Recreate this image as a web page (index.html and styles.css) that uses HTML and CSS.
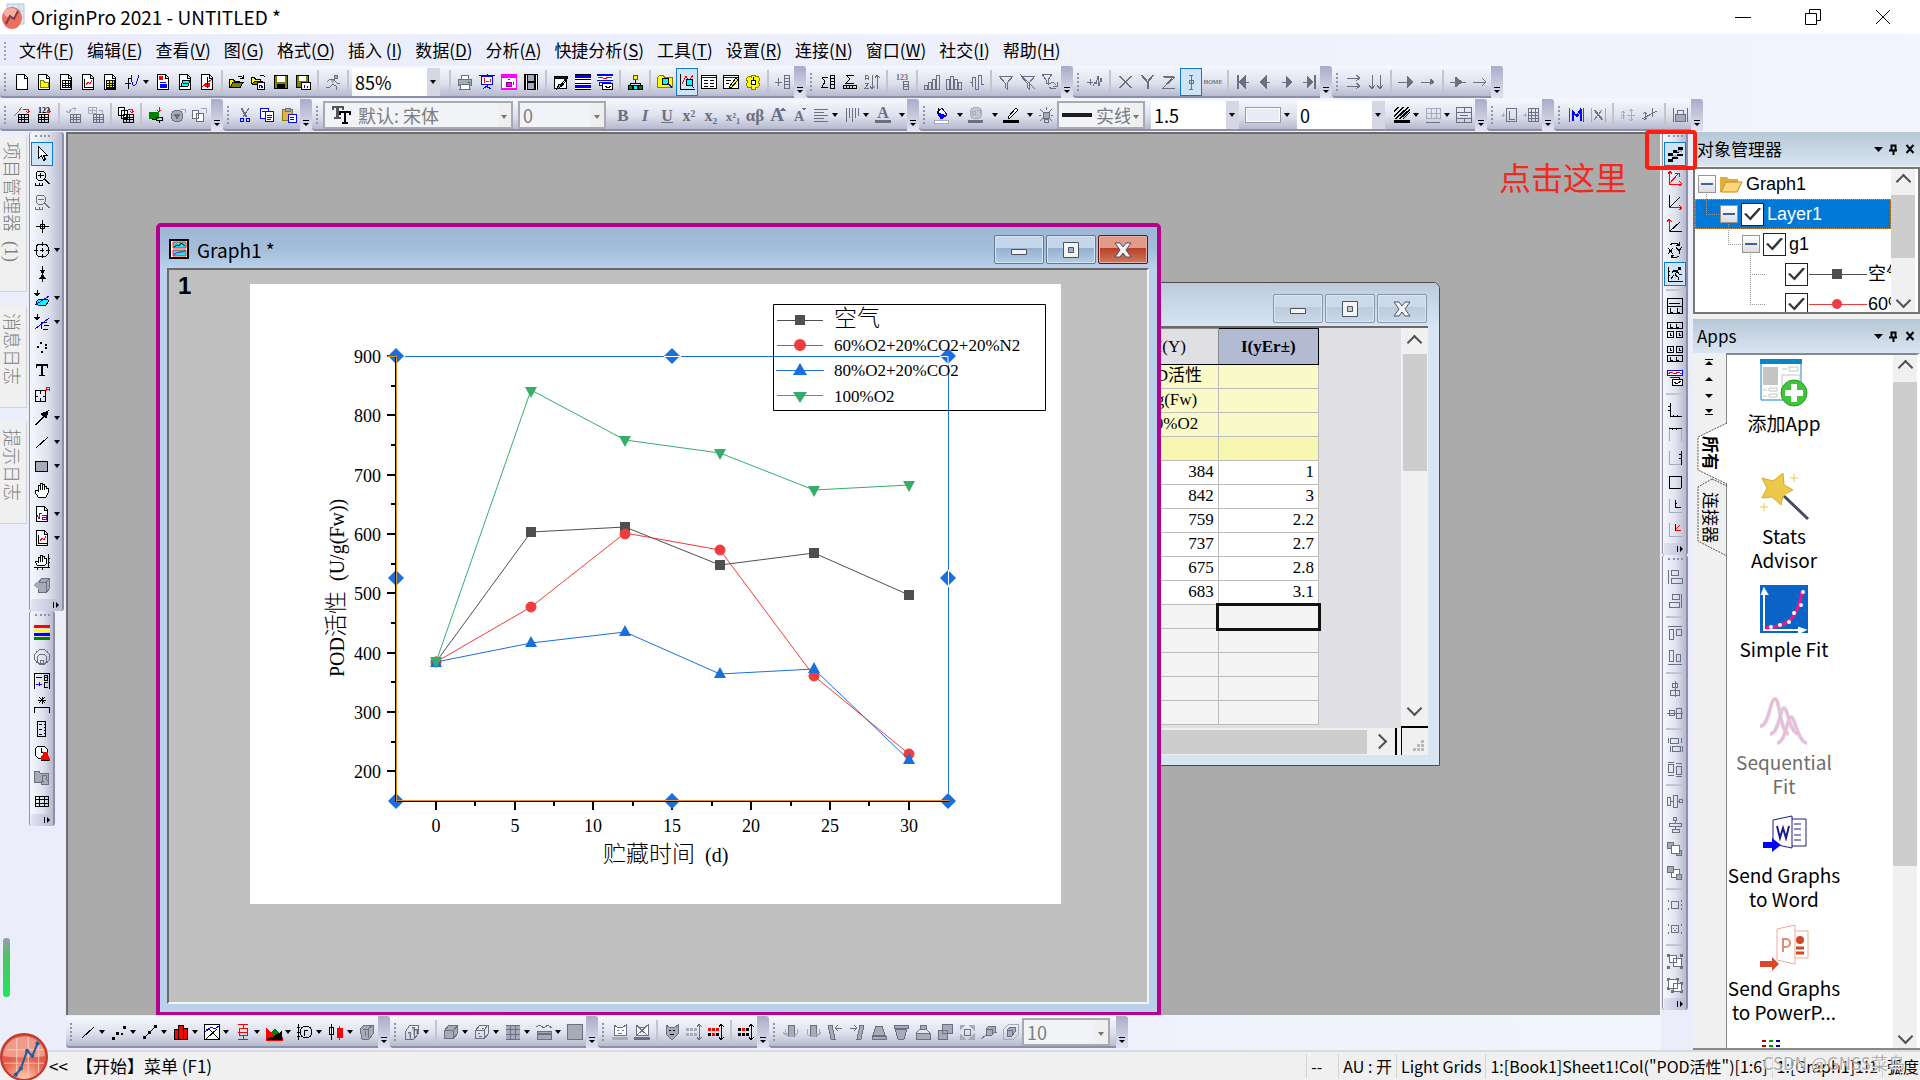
FILE: index.html
```html
<!DOCTYPE html>
<html lang="zh-CN">
<head>
<meta charset="utf-8">
<title>OriginPro 2021 - UNTITLED *</title>
<link rel="stylesheet" href="styles.css">
</head>
<body>
<header class="titlebar">
  <svg class="app-icon" viewBox="0 0 24 28"><path d="M6 1h17v20H6z" fill="#dbe9f5" stroke="#a9c6e0"/><path d="M12 1v20M18 1v20M6 8h17M6 14h17" stroke="#b8d0e6"/><ellipse cx="11" cy="15" rx="10" ry="11" fill="#ea6f5c"/><ellipse cx="10" cy="10" rx="7" ry="5" fill="#f5b0a2"/><path d="M5 21l4-8 4 3 4-8" stroke="#7a3b52" stroke-width="2" fill="none"/></svg>
  <h1>OriginPro 2021 - UNTITLED *</h1>
  <div class="caption">
    <button aria-label="最小化"><svg viewBox="0 0 16 16"><path d="M0 8.500h16"/></svg></button>
    <button aria-label="还原"><svg viewBox="0 0 16 16"><path d="M.5 4.500h11v11H.5zM4.500 4V.5h11v11h-4"/></svg></button>
    <button aria-label="关闭"><svg viewBox="0 0 16 16"><path d="M1 1l14 14M15 1L1 15"/></svg></button>
  </div>
</header>
<nav class="menubar">
  <a href="#">文件(<u>F</u>)</a><a href="#">编辑(<u>E</u>)</a><a href="#">查看(<u>V</u>)</a><a href="#">图(<u>G</u>)</a><a href="#">格式(<u>O</u>)</a><a href="#">插入 (<u>I</u>)</a><a href="#">数据(<u>D</u>)</a><a href="#">分析(<u>A</u>)</a><a href="#">快捷分析(<u>S</u>)</a><a href="#">工具(<u>T</u>)</a><a href="#">设置(<u>R</u>)</a><a href="#">连接(<u>N</u>)</a><a href="#">窗口(<u>W</u>)</a><a href="#">社交(<u>I</u>)</a><a href="#">帮助(<u>H</u>)</a>
</nav>
<div class="bar-row">
  <div class="bar">
    <span class="tools" data-icons="doc docfolder docgrid docgraph docmatrix func^ doclayout docnote docimg | open opent save savet | run |"></span>
    <label class="combo w88"><select aria-label="缩放"><option>85%</option></select></label>
    <span class="tools" data-icons="| print slide camera film | brush bars stack | tree | find *findg script edit gear | addcol"></span>
  </div>
  <div class="bar"><span class="tools" data-icons="sigcol sigrow sort | n123 | hist1 hist2 hist3 | funnel funnelx funnelr"></span></div>
  <div class="bar"><span class="tools" data-icons="addwave | tx ty tz *cursor home | first prev next last"></span></div>
  <div class="bar"><span class="tools" data-icons="rr dd | arr1 arr2 | arr3 arr4"></span></div>
</div>
<div class="bar-row">
  <div class="bar"><span class="tools" data-icons="impwiz imp123 | recalc batch | dup | plug world copies"></span></div>
  <div class="bar"><span class="tools" data-icons="cut copy paste"></span></div>
  <div class="bar">
    <label class="combo font off"><svg viewBox="0 0 20 20"><path d="M1 1h12v4h-2V3H8v9h2v2H3v-2h2V3H3v2H1z" fill="#555"/><path d="M8 6h12v4h-2V8h-3v9h2v2h-6v-2h2V8h-3v2H8z" fill="#000"/></svg><select aria-label="字体" disabled><option>默认: 宋体</option></select></label>
    <label class="combo w88 off"><select aria-label="字号" disabled><option>0</option></select></label>
    <span class="tools" data-icons="bold ital under sup sub supsub ab abig asmall align^ valign^ acolor^^"></span>
  </div>
  <div class="bar">
    <span class="tools" data-icons="bucket^^ globe^^ pencil^^ bulb"></span>
    <label class="combo w88 off"><i class="solid-line"></i><select aria-label="线型" disabled><option>实线</option></select></label>
    <label class="combo w88"><select aria-label="线宽"><option>1.5</option></select></label>
    <button class="swatch" aria-label="填充颜色"><i></i></button>
    <label class="combo w88"><select aria-label="图案"><option>0</option></select></label>
    <span class="tools" data-icons="hatch^ border^ tcell"></span>
  </div>
  <div class="bar"><span class="tools" data-icons="addlayer addgrid"></span></div>
  <div class="bar"><span class="tools" data-icons="mask unmask | align1 align2 | lock"></span></div>
</div>
<main class="body">
  <aside class="side-tabs">
    <button>项目管理器&nbsp;&nbsp;(1)</button><button>消息日志</button><button>提示日志</button>
    <i class="meter"></i>
  </aside>
  <div class="dock left">
    <div class="bar vert wide"><span class="tools" data-icons="*pointer zoomin zoomout cross target^ snap pick^ pickl^ dots text annot arrow^ line^ rect^ hand eq^ graphobj^ handax cube"></span></div>
    <div class="bar vert"><span class="tools" data-icons="colors bubble legend star scale stamp fstamp table"></span></div>
  </div>
  <section class="center">
    <div class="workspace">
      <article class="win book">
        <header><div class="wbtns"><button aria-label="最小化"><svg viewBox="0 0 20 20"><use href="#w-min"/></svg></button><button aria-label="最大化"><svg viewBox="0 0 20 20"><use href="#w-max"/></svg></button><button aria-label="关闭"><svg viewBox="0 0 20 20"><use href="#w-close"/></svg></button></div></header>
        <div class="sheet">
          <div class="cells">
            <table>
              <thead><tr><th>G(Y)</th><th>H(Y)</th><th class="sel">I(yEr±)</th></tr></thead>
              <tbody class="meta">
                <tr><td></td><td>POD活性</td><td></td></tr><tr><td></td><td>U/g(Fw)</td><td></td></tr><tr><td></td><td>100%O2</td><td></td></tr><tr class="deep"><td></td><td></td><td></td></tr>
              </tbody>
              <tbody class="data">
                <tr><td></td><td>384</td><td>1</td></tr><tr><td></td><td>842</td><td>3</td></tr><tr><td></td><td>759</td><td>2.2</td></tr><tr><td></td><td>737</td><td>2.7</td></tr><tr><td></td><td>675</td><td>2.8</td></tr><tr><td></td><td>683</td><td>3.1</td></tr>
              </tbody>
              <tbody class="blank">
                <tr><td></td><td></td><td class="active"></td></tr><tr><td></td><td></td><td></td></tr><tr><td></td><td></td><td></td></tr><tr><td></td><td></td><td></td></tr><tr><td></td><td></td><td></td></tr>
              </tbody>
            </table>
          </div>
          <div class="scroll v"><b class="up"></b><i></i><b class="down"></b></div>
          <div class="scroll h"><i></i><b class="right"></b></div>
          <div class="corner"><svg viewBox="0 0 12 12"><path d="M8 0h3v3H8zM4 4h3v3H4zM8 4h3v3H8zM0 8h3v3H0zM4 8h3v3H4zM8 8h3v3H8z" fill="#b8b8b8"/></svg></div>
        </div>
      </article>
      <article class="win graph">
        <header>
          <svg class="wicon" viewBox="0 0 22 22"><path d="M1 1h18v18H1z" fill="#fff" stroke="#000" stroke-width="2"/><path d="M4 3h13v6H4zM4 11h13v6H4z" fill="#19e5ea" stroke="#f22"/><path d="M5 8l3-2 2 1 2-3 4 3" stroke="#000" fill="none"/><path d="M5 16c3-4 6-2 11-4" stroke="#808" fill="none"/></svg>
          <h2>Graph1 *</h2>
          <div class="wbtns"><button aria-label="最小化"><svg viewBox="0 0 20 20"><use href="#w-min"/></svg></button><button aria-label="最大化"><svg viewBox="0 0 20 20"><use href="#w-max"/></svg></button><button class="close" aria-label="关闭"><svg viewBox="0 0 20 20"><use href="#w-close"/></svg></button></div>
        </header>
        <div class="canvas">
          <b class="layer">1</b>
          <svg class="page" viewBox="0 0 811 620">
            <g class="series">
              <g stroke="#4f4f4f" fill="#4f4f4f"><path class="ln" d="M186 378L281 248L375 243L470 281L564 269L659 311"/><path class="mk" d="M181 373h10v10h-10zM276 243h10v10h-10zM370 238h10v10h-10zM465 276h10v10h-10zM559 264h10v10h-10zM654 306h10v10h-10z"/></g>
              <g stroke="#f03c3c" fill="#f03c3c"><path class="ln" d="M186 378L281 323L375 249L470 266L564 392L659 470"/><circle cx="186" cy="378" r="5"/><circle cx="281" cy="323" r="5"/><circle cx="375" cy="250" r="5"/><circle cx="470" cy="266" r="5"/><circle cx="564" cy="392" r="5"/><circle cx="659" cy="470" r="5"/></g>
              <g stroke="#1a6fdf" fill="#1a6fdf"><path class="ln" d="M186 378L281 359L375 348L470 390L564 385L659 476"/><path class="mk" d="M180 383l6-11 6 11zM275 363l6-11 6 11zM369 352l6-11 6 11zM464 394l6-11 6 11zM558 389l6-11 6 11zM653 480l6-11 6 11z"/></g>
              <g stroke="#37ad6b" fill="#37ad6b"><path class="ln" d="M186 378L281 106L375 156L470 169L564 206L659 201"/><path class="mk" d="M180 373l6 11 6-11zM275 103l6 11 6-11zM369 152l6 11 6-11zM464 165l6 11 6-11zM558 202l6 11 6-11zM653 197l6 11 6-11z"/></g>
            </g>
            <path d="M137 72h9M137 131h9M137 191h9M137 250h9M137 309h9M137 369h9M137 428h9M137 487h9M141 102h5M141 161h5M141 220h5M141 280h5M141 339h5M141 398h5M141 458h5M186 518v8M265 518v8M343 518v8M422 518v8M501 518v8M580 518v8M659 518v8M225 518v4M304 518v4M383 518v4M462 518v4M541 518v4M619 518v4M698 518v4" stroke="#000" stroke-width="2"/>
            <g fill="#1a6fdf"><path id="hd" d="M138 72l8-8 8 8-8 8z"/><use href="#hd" x="276"/><use href="#hd" x="552"/><use href="#hd" y="222"/><use href="#hd" x="552" y="222"/><use href="#hd" y="445"/><use href="#hd" x="276" y="445"/><use href="#hd" x="552" y="445"/></g>
            <path d="M414 72.500h17M698.500 286v17M690 72.500h8v8" stroke="#fff" fill="none"/>
            <path d="M155 72.500H414M431 72.500H690M698.500 81V286M698.500 303V509" stroke="#1a6fdf" fill="none"/>
            <path d="M145.500 72v446M146 517.500h553" stroke="#000"/><path d="M146.500 72v446M146 516.500h553M137 72.500h9" stroke="#e8901c"/>
            <g class="tick" text-anchor="end"><text x="131" y="79">900</text><text x="131" y="138">800</text><text x="131" y="198">700</text><text x="131" y="257">600</text><text x="131" y="316">500</text><text x="131" y="376">400</text><text x="131" y="435">300</text><text x="131" y="494">200</text></g>
            <g class="tick" text-anchor="middle"><text x="186" y="548">0</text><text x="265" y="548">5</text><text x="343" y="548">10</text><text x="422" y="548">15</text><text x="501" y="548">20</text><text x="580" y="548">25</text><text x="659" y="548">30</text></g>
            <text class="axis-title" x="353" y="578"><tspan class="han">贮藏时间</tspan>&nbsp; (d)</text>
            <text class="axis-title" transform="translate(94 393) rotate(-90)">POD<tspan class="han">活性</tspan>&nbsp; (U/g(Fw))</text>
            <path d="M523.500 20.500h272v106h-272z" fill="none" stroke="#000"/>
            <path d="M527 36.500h46" stroke="#4f4f4f"/><path d="M545 31h10v10h-10z" fill="#4f4f4f"/>
            <path d="M527 61.500h46" stroke="#f03c3c"/><circle cx="550" cy="61" r="6" fill="#f03c3c"/>
            <path d="M526 86.500h48" stroke="#1a6fdf"/><path d="M543 91l7-12 7 12z" fill="#1a6fdf"/>
            <path d="M527 111.500h46" stroke="#37ad6b"/><path d="M543 108l7 11 7-11z" fill="#37ad6b"/>
            <text class="song" x="584" y="42"><tspan class="han">空气</tspan></text><text class="song" x="584" y="67">60%O2+20%CO2+20%N2</text><text class="song" x="584" y="92">80%O2+20%CO2</text><text class="song" x="584" y="118">100%O2</text>
          </svg>
        </div>
      </article>
    </div>
    <div class="bar-row bottom">
      <div class="bar"><span class="tools" data-icons="line^ scatter^ linesym^ column^ multi^ box^ area^ polar^ candle^ book3"></span></div>
      <div class="bar"><span class="tools" data-icons="bar3d^ | surf^ wire^ heat^ contour^ image"></span></div>
      <div class="bar"><span class="tools" data-icons="face facex | facem dotsg dotsr | dotsk"></span></div>
      <div class="bar"><span class="tools" data-icons="rotl rotr tiltl tiltr trap1 trap2 persp squares fit axes3 cube3"></span><label class="combo w88 off"><select aria-label="角度" disabled><option>10</option></select></label></div>
    </div>
  </section>
  <div class="dock right">
    <div class="bar vert"><span class="tools" data-icons="*aa ax1 ax2 ax3 xy *speed | lay1 lay2 lay3 lay4 | axl axt axr axb axi axn"></span></div>
    <div class="bar vert"><span class="tools" data-icons="al1 al2 | al3 al4 | al5 al6 | al7 al8 | sp1 sp2 fr1 fr2 | bx1 bx2 | grp ungrp"></span></div>
  </div>
  <aside class="panels">
    <header class="phead"><h2>对象管理器</h2><svg viewBox="0 0 40 12"><use href="#p-ctl"/></svg></header>
    <div class="tree">
      <ul>
        <li><i class="exp"></i><svg class="folder" viewBox="0 0 24 20"><path d="M1 3h7l2 2h9v4H6L2 18H1z" fill="#e0ac3c"/><path d="M2 18L7 8h16l-5 10z" fill="#fbd77a" stroke="#c08a20"/></svg><span>Graph1</span></li>
        <li class="l1 on"><i class="exp"></i><input type="checkbox" id="t1" checked><label for="t1">Layer1</label></li>
        <li class="l2"><i class="exp"></i><input type="checkbox" id="t2" checked><label for="t2">g1</label></li>
        <li class="l3"><input type="checkbox" id="t3" checked><svg viewBox="0 0 58 12"><path d="M0 6.500h58" stroke="#4f4f4f"/><path d="M23 1h10v10H23z" fill="#4f4f4f"/></svg><label for="t3">空气</label></li>
        <li class="l3"><input type="checkbox" id="t4" checked><svg viewBox="0 0 58 12"><path d="M0 6.500h58" stroke="#f03c3c"/><circle cx="28" cy="6" r="5" fill="#f03c3c"/></svg><label for="t4">60%</label></li>
      </ul>
      <div class="scroll v"><b class="up"></b><i></i><b class="down"></b></div>
    </div>
    <header class="phead"><h2>Apps</h2><svg viewBox="0 0 40 12"><use href="#p-ctl"/></svg></header>
    <div class="apps">
      <div class="cats">
        <svg class="nav" viewBox="0 0 8 56"><path d="M0 .5h8M0 55.500h8" stroke="#000"/><path d="M0 6l4-4 4 4zM0 22l4-4 4 4zM0 35h8l-4 4zM0 50h8l-4 4z"/></svg>
        <button class="cat sel"><svg viewBox="0 0 30 62"><path d="M30 1L1 15v33l29 14" fill="#fff" stroke="#555" stroke-dasharray="2 1"/></svg><span>所有</span></button>
        <button class="cat"><svg viewBox="0 0 30 78"><path d="M15 1L1 9v54l29 15M15 1l15 7" fill="none" stroke="#555" stroke-dasharray="2 1"/></svg><span>连接器</span></button>
      </div>
      <ul class="list">
        <li><svg viewBox="0 0 48 48"><path d="M1 1h40v40H1z" fill="#fff" stroke="#0a84c8"/><path d="M0 0h42v5H0z" fill="#0a84c8"/><path d="M3 8h15v18H3z" fill="#c4c4c4"/><path d="M22 10h5M29 8h9v4h-9zM22 16h18v14H22zM3 31h4M9 29h8v3H9zM3 37h4M9 35h8v3H9z" fill="none" stroke="#c4c4c4"/><circle cx="34" cy="34" r="13" fill="#3fc43a" stroke="#2d9a2b"/><path d="M31 25h6v6h6v6h-6v6h-6v-6h-6v-6h6z" fill="#fff"/></svg><a href="#">添加App</a></li>
        <li><svg viewBox="0 0 48 48"><path d="M24 24l24 23" stroke="#454c5c" stroke-width="3"/><path d="M23 1l1 12 9 5-10 5-2 10-9-8-10 1 5-10-5-10 11 3z" fill="#ecc94b" stroke="#d5ab30"/><path d="M34 2v8M30 6h8M4 31v8M0 35h8" stroke="#ecc94b"/></svg><a href="#">Stats<br>Advisor</a></li>
        <li><svg viewBox="0 0 48 48"><path d="M0 0h48v48H0z" fill="#0a64c8"/><path d="M4 46V6M2 9l2-5 3 5zM3 45h42M39 43l6 2-6 3z" stroke="#fff" stroke-width="2" fill="#fff"/><path d="M6 43c18-2 30-4 36-36" fill="none" stroke="#ff0f84" stroke-width="3"/><g fill="#fff"><circle cx="11" cy="42" r="2"/><circle cx="20" cy="40" r="2"/><circle cx="29" cy="37" r="2"/><circle cx="34" cy="28" r="2"/><circle cx="41" cy="20" r="2"/><circle cx="43" cy="7" r="2"/></g></svg><a href="#">Simple Fit</a></li>
        <li class="dim"><svg viewBox="0 0 48 48"><g fill="none" stroke="#d9d6f3" stroke-width="4"><path d="M0 28c9 1 10-27 15-27s5 34 14 35"/><path d="M10 36c9 0 10-26 14-26s5 25 15 26"/><path d="M17 45c9 0 10-26 14-26s7 26 16 26"/></g><g fill="none" stroke="#f0b8cc" stroke-width="2"><path d="M0 28c9 1 10-27 15-27s5 34 14 35"/><path d="M10 36c9 0 10-26 14-26s5 25 15 26"/><path d="M17 45c9 0 10-26 14-26s7 26 16 26"/></g></svg><a href="#">Sequential<br>Fit</a></li>
        <li><svg viewBox="0 0 48 48"><path d="M13 9l19-4v32l-19-4zM32 8h14v27H32M34 13h7M34 18h7M34 24h7M34 29h7" fill="#fff" stroke="#1c1c8c"/><path d="M17 15l3 12 3-10 3 10 3-12" fill="none" stroke="#1c1c8c" stroke-width="2"/><path d="M3 31h9v-4l9 7-9 7v-4H3z" fill="#00f"/></svg><a href="#">Send Graphs<br>to Word</a></li>
        <li><svg viewBox="0 0 48 48"><path d="M17 5l18-4v39l-18-4zM35 7h13v27H35" fill="#fff" stroke="#f0a898"/><path d="M23 28V15h3a4 4 0 010 8h-3" fill="none" stroke="#e08a78" stroke-width="2"/><path d="M36 24h8M36 29h8" stroke="#d24726" stroke-width="3"/><circle cx="40" cy="16" r="4" fill="#d24726"/><path d="M0 37h12v-4l7 7-7 7v-4H0z" fill="#d9482b"/></svg><a href="#">Send Graphs<br>to PowerP...</a></li>
        <li><svg viewBox="0 0 48 48"><path d="M2 4h4M2 9h4M2 14h4" stroke="#a00" stroke-width="2"/><path d="M9 4h4M9 9h4M9 14h4" stroke="#090" stroke-width="2"/><path d="M16 4h4M16 9h4M16 14h4" stroke="#00a" stroke-width="2"/><circle cx="31" cy="20" r="7" fill="#a8a020"/></svg></li>
      </ul>
      <div class="scroll v"><b class="up"></b><i></i><b class="down"></b></div>
    </div>
  </aside>
  <div class="note-box"></div>
  <p class="note">点击这里</p>
</main>
<footer class="status">
  <svg class="start" viewBox="0 0 46 46"><defs><radialGradient id="ball" cx=".5" cy="1" r="1"><stop offset="0" stop-color="#ffd0b0"/><stop offset=".5" stop-color="#e8604c"/><stop offset="1" stop-color="#d8483c"/></radialGradient></defs><circle cx="23" cy="23" r="22" fill="url(#ball)" stroke="#c23a30" stroke-width="2"/><path d="M3 22a20 19 0 0140 0c-12 2-28 2-40 0z" fill="#f7b9a6" opacity=".7"/><path d="M16 5v36M27 3v40M37 8v30M6 16h36M4 29h38" stroke="#fbdcd0" opacity=".8"/><path d="M15 40l5-6 6-17 5 5 5-12" fill="none" stroke="#1d5fa0" stroke-width="2"/><g fill="#1d5fa0"><circle cx="15" cy="40" r="2"/><circle cx="20" cy="34" r="2"/><circle cx="26" cy="17" r="2"/><circle cx="31" cy="22" r="2"/><circle cx="36" cy="10" r="2"/></g></svg>
  <span class="chev">&lt;&lt;</span><span class="hint">【开始】菜单 (F1)</span>
  <span class="cell c1">--</span><span class="cell c2">AU : 开</span><span class="cell">Light Grids</span><span class="cell c3">1:[Book1]Sheet1!Col("POD活性")[1:6]</span><span class="cell">1:[Graph1]1!1</span><span class="cell c6">弧度</span>
  <span class="mark">CSDN @GNSS菜鸟</span>
</footer>
<svg class="defs">
  <g id="w-min"><path d="M2.500 9.500h15v5h-15z" fill="#f4f4f4" stroke="#4b5262" /></g>
  <g id="w-max"><path d="M2.500 2.500h15v15h-15zM7.500 7.500v5h5v-5z" fill="#f4f4f4" fill-rule="evenodd" stroke="#4b5262"/></g>
  <g id="w-close"><path d="M2 3h5l3 4 3-4h5l-5 7 5 7h-5l-3-4-3 4H2l5-7z" fill="#f4f4f4" stroke="#4b5262"/></g>
  <g id="p-ctl"><path d="M0 4h9L4.500 9z"/><path d="M19.500 7V2.500h4V7M17 7.500h8M21.500 8v4M34.500 2l7 8M41.500 2l-7 8" transform="translate(-2 0)" fill="none" stroke="#000" stroke-width="2"/></g>
</svg>
<script src="toolbar.js"></script>
</body>
</html>
```

FILE: styles.css
```css
* { box-sizing: border-box; }
:root {
  --ui: "Noto Sans CJK SC", "Open Sans", sans-serif;
  --song: "Liberation Serif", "Noto Sans CJK SC", serif;
  --edge: #8e90a8;
}
body { margin: 0; height: 100vh; display: flex; flex-direction: column; overflow: hidden; background: #ebedfb; font: 17px/24px var(--ui); color: #000; }
button { font: inherit; color: inherit; background: none; border: 0; padding: 0; display: block; }
h1, h2, p, ul { margin: 0; padding: 0; font-weight: 400; list-style: none; }
a { color: inherit; text-decoration: none; }
svg { display: block; overflow: visible; }
.defs { position: absolute; width: 0; height: 0; }

.titlebar { flex: 0 0 34px; display: flex; align-items: center; background: #fff; padding-left: 1px; }
.titlebar h1 { font-size: 19px; margin-left: 6px; }
.app-icon { width: 24px; height: 28px; }
.caption { margin-left: auto; margin-right: 2px; display: flex; }
.caption button { width: 70px; height: 34px; display: grid; place-items: center; }
.caption svg { width: 16px; height: 16px; fill: none; stroke: #000; }

.menubar { flex: 0 0 32px; display: flex; align-items: center; gap: 13px; padding-left: 19px; background: linear-gradient(90deg, #eaecfb, #f2f5fd); position: relative; white-space: nowrap; }
.menubar::before { content: ""; position: absolute; left: 4px; top: 8px; height: 18px; border-left: 2px dotted #a0a4b8; }
.menubar u { text-underline-offset: 2px; }

.bar-row { flex: 0 0 33px; display: flex; background: linear-gradient(90deg, #eaecfb, #f2f5fd); padding-bottom: 1px; }
.bar { display: flex; align-items: center; height: 32px; padding: 2px 0 0 11px; position: relative; background: linear-gradient(#f5f8fe, #dfe2ee 55%, #b7bacf); border-bottom: 2px solid var(--edge); border-radius: 3px; }
.bar::before { content: ""; position: absolute; left: 4px; top: 7px; height: 18px; border-left: 2px dotted #9094a8; }
.bar::after { content: ""; flex: 0 0 12px; align-self: stretch; margin: -2px 0; background: linear-gradient(#a9acc8, #e2e3f2); border-radius: 0 3px 3px 0; }
.tools { display: flex; align-items: center; }
.tools button { width: 22px; height: 28px; display: flex; align-items: center; justify-content: center; flex: none; border: 1px solid transparent; }
.tools button.drop { width: 31px; justify-content: flex-start; padding-left: 2px; }
.tools button.drop2 { width: 35px; justify-content: flex-start; padding-left: 2px; }
.tools button.drop::after, .tools button.drop2::after { content: ""; margin-left: 3px; border: 3px solid transparent; border-top: 4px solid #000; border-bottom: 0; }
.tools button.drop2::after { margin-left: 8px; }
.tools button.on { background: #cfe4f7; border-color: #0a7ad6; }
.tools svg { width: 16px; height: 16px; flex: none; fill: none; shape-rendering: crispEdges; }
.tools text { font-family: "Liberation Serif", serif; font-weight: 700; fill: #6a7082; }
.tools hr { width: 2px; height: 24px; margin: 0 3px; border: 0; background: #c3c4cc; }
.more { position: absolute; right: 2px; bottom: 2px; width: 8px; height: 8px; }

.combo { height: 28px; display: flex; align-items: center; position: relative; background: #fff; margin-right: 6px; }
.combo.w88 { width: 88px; }
.combo.font { width: 190px; }
.combo select { appearance: none; flex: 1; min-width: 0; height: 26px; border: 0; background: none; padding: 0 0 0 3px; font: 18px/24px var(--ui); color: #000; }
.combo::after { content: ""; position: absolute; right: 4px; top: 12px; border: 3px solid transparent; border-top: 4px solid #000; border-bottom: 0; }
.combo::before { content: ""; position: absolute; right: 0; top: 0; bottom: 0; width: 13px; background: #d5d7e5; }
.combo.off { border: 2px solid #a8aab2; background: #f2f3f7; }
.combo.off select { color: #7d7d7d; opacity: 1; }
.combo.off::before { background: #efefef; }
.combo.off::after { border-top-color: #777; }
.combo svg { width: 20px; height: 20px; margin: 0 4px 0 6px; }
.solid-line { width: 30px; height: 4px; margin-left: 3px; background: #1c1c1c; }
.solid-line + select { padding-left: 4px; }
.swatch { width: 46px; height: 28px; margin-right: 6px; display: flex; align-items: center; }
.swatch i { width: 36px; height: 16px; border: 1px solid #999ba8; background: #e9ebf5; box-shadow: inset 0 0 0 1px #fff; }
.swatch::after { content: ""; margin-left: 3px; border: 3px solid transparent; border-top: 4px solid #000; border-bottom: 0; }
.combo:first-child { margin-right: 5px; }

.body { flex: 1; min-height: 0; display: flex; position: relative; background: #ebedfb; }
.side-tabs { flex: 0 0 29px; display: flex; flex-direction: column; gap: 14px; padding: 3px 2px 0 0; position: relative; }
.side-tabs button { writing-mode: vertical-rl; text-orientation: sideways; background: #f0f0f0; border: solid #d4d4d8; border-width: 0 1px 1px 0; color: #808080; font: 300 18px/22px var(--song); text-align: left; padding: 7px 4px 22px 0; min-height: 102px; }
.side-tabs button:first-child { min-height: 157px; }
.meter { position: absolute; left: 3px; bottom: 53px; width: 7px; height: 59px; border-radius: 3px; background: linear-gradient(#9a9cac, #50c060 30%, #1ee85c); }
.dock { display: flex; flex-direction: column; align-items: flex-start; }
.dock.left { flex: 0 0 37px; }
.dock.right { flex: 0 0 32px; padding-left: 1px; }
.bar.vert { width: 26px; height: auto; flex-direction: column; align-items: flex-start; padding: 10px 0 0 1px; border: solid var(--edge); border-width: 0 2px 0 1px; background: linear-gradient(90deg, #f5f8fe, #dfe2ee 55%, #b7bacf); }
.bar.vert.wide { width: 35px; }
.bar.vert::before { left: 5px; top: 3px; height: 0; width: 15px; border: 0; border-top: 2px dotted #9094a8; }
.bar.vert::after { flex: 0 0 12px; width: 100%; margin: 1px 0 0; background: linear-gradient(90deg, #e2e3f2, #b9bbd2); }
.vert .tools { flex-direction: column; align-items: flex-start; }
.vert .tools button { height: 24px; }
.vert .tools button.drop { width: 30px; }
.vert .tools button.drop::after { margin-left: 4px; }
.vert .tools hr { width: 19px; height: 2px; margin: 3px 2px; }
.vert .more { transform: rotate(-90deg); }

.center { flex: 1; min-width: 0; display: flex; flex-direction: column; }
.workspace { flex: 1; min-height: 0; position: relative; overflow: hidden; background: #ababab; border: solid #6c6c6c; border-width: 2px 0 0 2px; border-right: 1px solid #f4f4f4; }
.bar-row.bottom { flex: 0 0 35px; padding-top: 1px; }
.win { position: absolute; display: flex; flex-direction: column; }
.win > header { display: flex; align-items: center; flex: none; }
.wbtns { margin-left: auto; display: flex; gap: 2px; }
.wbtns button { width: 50px; height: 29px; display: grid; place-items: center; border: 1px solid #5f7896; border-radius: 2px; background: linear-gradient(#c3d6ea 45%, #96b1cf 46%, #b4cce6); box-shadow: inset 0 0 0 1px #d8e6f3; }
.wbtns .close { border-color: #5a1a1a; background: linear-gradient(#e29a8a 45%, #b84028 46%, #d07a60); box-shadow: inset 0 0 0 1px #eab0a2; }
.wbtns svg { width: 20px; height: 20px; }
.graph { left: 88px; top: 89px; width: 1005px; height: 793px; border: 4px solid #b4008c; border-radius: 5px 5px 0 0; background: #b9d1ea; padding: 0 8px 8px 7px; }
.graph > header { height: 41px; margin: 0 -8px 0 -7px; padding: 4px 9px 0; background: linear-gradient(#9cb6d4, #a6bfdb 60%, #b9d1ea); }
.graph h2 { font-size: 19px; margin-left: 6px; }
.wicon { width: 22px; height: 22px; }
.canvas { flex: 1; background: #c0c0c0; border: 2px solid #696969; border-right-color: #f4f4f4; border-bottom-color: #f4f4f4; position: relative; padding: 14px 0 0 81px; }
.layer { position: absolute; left: 9px; top: 3px; font: bold 24px/26px "Liberation Sans", sans-serif; }
.page { width: 811px; height: 620px; background: #fff; }
.series { stroke-width: 1; }
.ln { fill: none; }
.mk { stroke: none; }
.tick { font: 18px var(--song); }
.song { font: 17px var(--song); }
.axis-title { font: 20px var(--song); }
.han { font-size: 23px; font-weight: 300; }
.book { left: 942px; top: 148px; width: 430px; height: 484px; border: 1px solid #4a4a4a; border-radius: 7px 7px 0 0; background: #d7e4f2; padding: 0 11px 10px 8px; box-shadow: inset 1px 1px #eff5fa; }
.book > header { height: 43px; margin: 0 -11px 0 -8px; padding: 8px 12px 0; background: linear-gradient(#bccada, #d7e4f2); border-radius: 6px 6px 0 0; }
.book .wbtns button { border-color: #8796ab; background: linear-gradient(#ccd9e7 45%, #bccbdc 46%, #cad8e7); }
.sheet { flex: 1; min-height: 0; display: grid; grid-template: 1fr 27px / 1fr 27px; border-top: 2px solid #696969; background: #f0f0f0; }
.cells { background: #e0dfe4; overflow: hidden; }
.cells table { border-collapse: collapse; table-layout: fixed; width: 302px; margin-left: -2px; font: 17px/20px var(--song); }
.cells th { height: 36px; padding: 0; font-weight: 400; background: #e0dfe4; border: 1px solid #888; border-bottom: 1px solid #000; }
.cells th.sel { background: #b3bbd3; font-weight: 700; border: 1px solid #000; }
.cells td { height: 24px; padding: 0 4px 2px; border: 1px solid #bcbcbc; text-align: right; overflow: hidden; background: #fff; }
.cells .meta td { background: #fafac8; text-align: center; }
.cells .meta .deep td { background: #f7f7b0; }
.cells .blank td { background: #f4f4f4; }
.cells .blank td.active { outline: 3px solid #111; outline-offset: -1px; }

.scroll { display: flex; background: #f0f0f0; align-items: center; }
.scroll.v { flex-direction: column; }
.scroll i { background: #cdcdcd; flex: none; }
.scroll b { width: 24px; height: 24px; display: grid; place-items: center; flex: none; }
.scroll b::before { content: ""; width: 9px; height: 9px; border: solid #505050; border-width: 2px 0 0 2px; transform: rotate(45deg); }
.scroll .down { margin-top: auto; }
.scroll .down::before { transform: rotate(225deg); }
.scroll .right::before { transform: rotate(135deg); }
.sheet .v { border-bottom: 2px solid #000; padding: 2px 0 6px; }
.sheet .v i { width: 24px; height: 117px; }
.sheet .h { margin-right: 4px; border-right: 2px solid #000; }
.sheet .h i { flex: 1; height: 24px; }
.sheet .h b { margin-right: 4px; }
.corner { border: solid #000; border-width: 0 0 0 1px; display: flex; align-items: flex-end; justify-content: flex-end; padding: 3px; }
.corner svg { width: 12px; height: 12px; }

.panels { flex: 0 0 227px; min-width: 0; display: flex; flex-direction: column; min-height: 0; background: #f0f0f0; }
.phead { flex: 0 0 34px; display: flex; align-items: center; justify-content: space-between; padding: 0 6px 0 4px; background: linear-gradient(#b6c7d6, #dae5f2); }
.phead h2 { font-size: 17px; }
.phead svg { width: 40px; height: 12px; }
.tree { flex: 0 0 147px; min-height: 0; height: 147px; margin: 1px 0 5px; display: flex; border: 2px solid #777; background: #fff; overflow: hidden; }
.tree ul { flex: 1; min-width: 0; overflow: hidden; }
.tree .v, .apps > .v { flex: 0 0 27px; border-right: 3px solid #fff; }
.tree .v i { width: 24px; height: 63px; margin-top: 2px; }
.tree li { height: 30px; display: flex; align-items: center; gap: 3px; padding-left: 3px; font: 18px/22px "Liberation Sans", "Noto Sans CJK SC", sans-serif; white-space: nowrap; position: relative; }
.tree li.l1 { padding-left: 25px; }
.tree li.l2 { padding-left: 47px; }
.tree li.l3 { padding-left: 90px; gap: 1px; }
.tree li.on { background: #0078d7; color: #fff; outline: 1px dotted #d08a3c; outline-offset: -1px; }
.tree li[class]::before { content: ""; position: absolute; left: 11px; top: -7px; width: 14px; height: 22px; border: dotted #999; border-width: 0 0 1px 1px; }
.tree li.l2::before { left: 33px; }
.tree li.l3::before { left: 55px; top: -15px; height: 30px; }
.exp { width: 18px; height: 18px; flex: none; border: 1px solid #969696; background: linear-gradient(#3f5fae, #3f5fae) center / 12px 2px no-repeat, linear-gradient(#fff, #dcdcdc); z-index: 1; }
.folder { width: 24px; height: 20px; }
.tree li svg { flex: none; }
.tree .l3 svg { width: 58px; height: 12px; }
.tree input { appearance: none; margin: 0; width: 23px; height: 23px; flex: none; border: 1px solid #222; background: #fff; display: grid; place-items: center; }
.tree input:checked::before { content: ""; width: 17px; height: 13px; background: #333; clip-path: polygon(0 50%, 12% 42%, 36% 75%, 88% 0, 100% 10%, 38% 100%); }

.apps { flex: 1; min-height: 0; display: flex; border-bottom: 2px solid #888; }
.cats { flex: 0 0 35px; border-right: 2px solid #888; display: flex; flex-direction: column; align-items: flex-end; }
.cats .nav { width: 8px; height: 56px; margin: 6px 13px 7px 0; }
.cat { width: 30px; height: 62px; position: relative; margin-right: -1px; }
.cat + .cat { height: 78px; margin-top: -6px; }
.cat svg { position: absolute; inset: 0; }
.cat span { position: relative; display: block; writing-mode: vertical-rl; text-orientation: sideways; line-height: 26px; padding-left: 1px; }
.cat.sel { font-weight: 700; }
.list { flex: 1; min-width: 0; overflow: hidden; border-top: 2px solid #888; background: #fff; padding: 4px 0 0; margin-left: -1px; text-align: center; font-size: 19px; white-space: nowrap; }
.list li { height: 113px; margin: 0 -8px 0 -60px; display: flex; flex-direction: column; align-items: center; gap: 4px; }
.list svg { width: 48px; height: 48px; flex: none; }
.list .dim { color: #6d6d6d; }
.apps > .v { border-top: 2px solid #888; }
.apps > .v i { width: 24px; height: 484px; margin-top: 3px; }

.note-box { position: absolute; right: 223px; top: -2px; width: 52px; height: 40px; border: 4px solid #ff1e10; border-radius: 4px; }
.note { position: absolute; right: 293px; top: 24px; font-size: 32px; line-height: 40px; color: #f02a1c; }

.status { flex: 0 0 30px; display: flex; align-items: center; background: #f0f0f0; border-top: 2px solid #dadae2; position: relative; white-space: nowrap; padding-left: 49px; font-size: 17px; }
.start { position: absolute; left: 0; top: -19px; width: 48px; height: 48px; }
.chev { width: 27px; }
.hint { margin-right: auto; }
.cell { border-left: 1px solid #d4d4d4; padding: 0 4px; font-size: 16px; }
.c1 { padding-right: 16px; }
.c6 { padding: 0 1px 0 4px; }
.mark { position: absolute; right: 15px; top: -1px; color: #a8a8a8; opacity: .9; text-shadow: 1px 1px #fff; font-size: 17px; }
```

FILE: toolbar.js
```js
// Toolbar glyphs on a 16x16 grid. Shapes are separated by ";", each one is path|stroke|fill.
const C = { k: '#000', w: '#fff', g: '#6a7082', l: '#a6abb9', r: '#f00', b: '#00f', y: '#ff0', c: '#0ff', n: '#008000', m: '#f0f', o: '#808000', p: '#808', '-': 'none' };
const DOC = 'M2.500 .5h8l3 3v12h-11zM10.500 1v3h3|k|w;';
const GRID = 'M4.500 6.500h8v7h-8zM4 9.500h8M4 11.500h8M7.500 6v8M10.500 6v8|k';
const T = (s, size = 17, extra = '') => `<text x="8" y="14" text-anchor="middle" font-size="${size}" ${extra}>${s}</text>`;
const TABLE = x => `M${x}.5 7.500h10v8h-10zM${x} 10.500h10M${x} 12.500h10M${x + 3}.5 7v8M${x + 6}.5 7v8`;
const CUBE = 'M1.500 6.500l4-5h9v8l-4 5h-9z|g|l;M1.500 6.500h9v8M10.500 6.500l4-5|g';
const ICONS = {
  doc: DOC, docfolder: DOC + 'M4.500 6.500h3l1 2h4v5h-8z|o|y', docgrid: DOC + GRID,
  docgraph: DOC + 'M4.500 5v8h8|k;M6 11l2-3 2 2 2-4|r', docmatrix: DOC + 'M4 6h9v8H4z|k|y;' + GRID,
  func: 'M4 15V6q0-2 3-2M1 9h6|k;M7 1q2 22 8 0|b', doclayout: DOC + 'M4 2h4v4H4z|-|r;M5 8h6M5 13h6|b;M5 10h6v3H5z|b|b',
  docnote: DOC + 'M4 12l2-6h7l-2 6z|k|c;M6 9h5|k', docimg: DOC + 'M3 13L13 5|r;M6 9h4v3H6z|r|r;M8 3v11|k',
  open: 'M.5 13V5.500h4l1 2h5v2|k|y;M1 13.500l3-5h10l-3 5z|k|o;M9 3q3-2 5 1M14 1v3h-3|k',
  opent: 'M.5 10V3.500h3l1 2h5v2|k|y;M1 10l3-3h8l-2 4z|k|o;M9 2q3-2 5 1|k;M6.500 8.500h7v7h-7z|k|w;M8 14v-3h2v3M11 14v-2|b',
  save: 'M1.500 1.500h13v13h-13z|k|o;M4 2h8v6H4z|-|w;M4 10h8v5H4z|-|k', savet: 'M1.500 1.500h12v12h-12z|k|o;M4 2h7v5H4z|-|w;M6.500 8.500h9v7h-9z|k|w;M9 14v-3M12 14v-2|b',
  run: 'M9 1h3v3H9z|g|l;M5 5h5l-3 5 4 2v4M8 10l-3 3H1M9 6l3 3h3M5 5L2 8|g;M6 6h3l-2 4|l|l',
  print: 'M4 5V1h7l1 4|g|w;M1.500 5.500h13v6h-13z|g|l;M4 10h8l1 5H3z|g|w;M11 8h2|n', slide: 'M0 1h16M8 0v1|b;M2.500 2.500h11v8h-11z|b|w;M5 4v5M11 5v3|r;M7 7h3|n;M8 11v3M4 15l4-3 4 3|b',
  camera: 'M.5 .5h15v15H.5z|m|w;M1 1h14v2H1zM1 14h14v1H1z|m|m;M5 8h5v4H5z|p|m;M7 5h2M12 8v3|p', film: 'M1 0h14v16H1z|-|k;M5 1h6v6H5zM5 9h6v6H5z|-|l;M3 1v15M13 1v15|w',
  brush: 'M1.500 2.500h12v12h-12z|k|w;M1 2h13v2H1z|k|b;M14 3L8 11M15 4L9 12|k;M4 15l2-5 3 2z|k|c', bars: 'M0 0h16v16H0z|-|w;M0 1h16v3H0zM0 11h16v3H0z|-|b;M0 .5h16M0 5.500h16M0 9.500h16M0 15.500h16|k',
  stack: 'M0 0h16v7H0z|-|w;M0 0h16v2H0zM0 6h16v1H0z|-|b;M1 4l3-1 4 2 3-2 4 1|r;M2.500 8.500h11v3h-11z|b|w;M5.500 9.500h10v6h-10z|k|w;M8 12l3 2 3-2|k', tree: 'M6 1h4v4H6z|n|y;M8 6v3M3 12V9h10v3|k;M1 11h4v4H1zM11 11h4v4h-4z|k|n;M6 11h4v4H6z|k|c',
  find: 'M.5 13.500v-10l2-2h4l1 2h8v10z|o|y;M5 4h6v6H5z|k|c;M10 9l5 5M11 9l4 4|b', findg: 'M1.500 0v15H16|k;M3 10l4-8 3 5 4-6|r;M7 5h6v6H7z|k|c;M12 11l3 3|b',
  script: 'M.5 1.500h15v13H.5z|k|w;M1 3h14|b;M3 6h4M9 6h4M3 9h4M9 9h4M3 12h4M9 12h4|k', edit: 'M.5 1.500h15v13H.5z|k|w;M1 3h14|b;M3 6h5M3 9h3|k;M6 13l7-9 2 2-7 8z|k|y', gear: 'M6 1h4v2l3-1 2 4-2 2 2 3-3 3-2-1v2H6v-2l-3 1-2-4 2-2-2-3 3-3 2 1z|o|y;M6 6h4v4H6z|k|w;M8 3v4|k',
  addcol: 'M0 8h7M3.500 4v8M9.500 1.500h5v13h-5zM9 4.500h5M9 7.500h5M9 10.500h5|g', sigcol: 'M8 3H2l3 5-3 5h6|k;M10.500 1.500h4v13h-4zM10 4.500h5M10 7.500h5M10 10.500h5|k', sigrow: 'M12 1H4l4 4-4 4h8|k;M1.500 11.500h13v3h-13zM4.500 11v4M7.500 11v4M10.500 11v4|k',
  sort: 'M1 6V2l2-1 1 1v4M1 4h3M1 9h4l-4 5h4|g;M8.500 1v14M6 12l2 3 3-3M13.500 1v14M11 4l2-3 3 3|g', n123: T('123', 8).replace('y="14"', 'y="6"') + '@M9.500 7.500h5v8h-5zM9 10.500h5M9 12.500h5|g',
  hist1: 'M.5 11.500h3v4h-3zM4.500 8.500h3v7h-3zM8.500 5.500h3v10h-3zM12.500 1.500h3v14h-3z|g', hist2: 'M.5 5.500h3v10h-3zM4.500 2.500h3v13h-3zM8.500 5.500h3v10h-3zM12.500 8.500h3v7h-3z|g', hist3: 'M1.500 8.500h3v4M4.500 12V3.500h3V15h3V1.500h3V10h2|g',
  funnel: 'M1 2h14L9 9v6l-2-2V9z|g', funnelx: 'M1 2h14L9 9v6l-2-2V9zM0 0l15 15|g', funnelr: 'M0 0h10L6 6v4l-2-1V6zM6 11q5-5 8 0M15 8v4h-4M14 14q-4 2-7-1|g',
  addwave: 'M0 8h6M3 5v6|g;M6 12l2-4 1 2 2-8 1 10 2-8 1 4|g', tx: 'M2 2l12 12M14 2L2 14M3 2l12 12M15 2L3 14|g', ty: 'M2 1l6 7 6-7M8 8v7M3 1l6 7 6-7M9 8v7|g', tz: 'M2 2h11L2 14h12M3 3h11L3 13|g', cursor: 'M8 1v14M6 1h4M6 15h4M6 6h4v3H6z|g', home: T('HOME', 6).replace('y="14"', 'y="10"'),
  first: 'M2 1v14M3 1v14|g;M4 8l6-6v12z|g|g;M10 8h4|g', prev: 'M3 8l6-6v12z|g|g;M9 8h4|g', next: 'M13 8L7 2v12z|g|g;M3 8h4|g', last: 'M13 1v14M14 1v14|g;M12 8L6 2v12z|g|g;M2 8h4|g',
  rr: 'M1 4h12M10 1l4 3-4 3M1 12h12M10 9l4 3-4 3|g', dd: 'M4 1v13M1 11l3 4 3-4M12 1v13M9 11l3 4 3-4|g', arr1: 'M0 8h9|g;M9 2l6 6-6 6z|g|g', arr2: 'M1 8h9|g;M10 5l4 3-4 3z|g|g', arr3: 'M0 8h5M12 8h4|g;M5 3l7 5-7 5z|g|g', arr4: 'M1 8h13M10 4l4 4-4 4|g',
  impwiz: 'M0 9l7-7M5 3l3-3|o;M9 2h5v3M12 4l2 2 2-2|r;' + TABLE(4) + '|k', imp123: T('123', 8, 'style="fill:#000"').replace('y="14"', 'y="6"') + '@M13 2v4M11 4l2 2 2-2|r;' + TABLE(2) + '|k', recalc: 'M3 6q1-5 6-4M8 0l2 2-2 2M0 4l3 2 2-2|l;' + TABLE(4) + '|g', batch: 'M.5 .5h8v6h-8zM0 3.500h8M4.500 0v6M11 3h3v4|l;' + TABLE(5) + '|g',
  dup: 'M.5 .5h6v8h-6zM3.500 3.500h6v8h-6z|k|w;M10 2h4v4M12 4l2 2 2-2|r;' + TABLE(5) + '|k', plug: 'M1 5h9v6H1z|n|n;M11 0v5M9 3l2 2 2-2|r;M8.500 10.500h6v3h-6zM4 12h4M11 14v2|k', world: '<circle cx="7" cy="9" r="6" stroke="#6a7082" fill="#a6abb9"/>@M4 7h6l-3 5z|g|g;M10 2h5v4|l', copies: 'M.5 3.500h6v8h-6zM4.500 6.500h7v8h-7z|g|w;M9 1h5v5|l',
  cut: 'M4 1l5 9M12 1L6 10M5 1l5 9|g;M3 11h3v3H3zM9 11h3v3H9z|b', copy: 'M1.500 1.500h8v10h-8z|b|w;M6.500 4.500h8v10h-8z|b|w;M3 4h4M8 8h5M8 10h5M8 12h4|b', paste: 'M1.500 2.500h10v11h-10z|o|#;M4 1h5v3H4z|g|l;M7.500 7.500h8v8h-8z|b|w;M9 10h4M9 12h4|b',
  bold: T('B', 17), ital: T('I', 17, 'font-style="italic"'), under: T('U', 16) + '@M2 15.500h12|g', sup: T('x²', 16), sub: T('x₂', 16), supsub: T('x²₁', 13), ab: T('αβ', 17), abig: T('A', 19) + '@M12 3l2-2 2 2z|g|g', asmall: T('A', 14) + '@M11 1h4l-2 2z|g|g',
  align: 'M1 2.500h14M1 5.500h10M1 8.500h14M1 11.500h10M1 14.500h14|g', valign: 'M2.500 1v14M5.500 1v10M8.500 1v14M11.500 1v10M14.500 1v8|g', acolor: T('A', 16).replace('y="14"', 'y="11"') + '@M0 13h16v3H0z|-|g',
  bucket: 'M4 5l5-4 5 7-6 4z|b|w;M4 5l8 3-4 4z|-|b;M5 1v5|k;M1 13h14v3H1z|l|w', globe: '<circle cx="8" cy="6" r="6" stroke="#a6abb9" fill="#c4c8d4"/>@M4 4h3v3H4zM9 3h3v4|l;M0 13h15v3H0z|-|g', pencil: 'M5 10l8-9 2 2-8 8H5z|k|w;M0 13h16v3H0z|-|k', bulb: 'M5 5h6v6H5z|g|l;M6 12h4v3H6zM8 0v3M1 8h2M13 8h2M2 2l3 3M14 2l-3 3M2 14l3-3M14 14l-3-3|g',
  hatch: 'M0 4l4-4M0 9l9-9M1 12L14 0M5 12L16 2M9 12l7-7M0 5l5-5M0 10l10-10M2 12L15 0M6 12L16 3|k;M0 13h16v3H0z|-|k', border: 'M1 1h14M1 6h14M1 11h14M1 1v11M6 1v11M11 1v11M15 1v11|l;M1 15h14|g', tcell: 'M.5 .5h15v15H.5zM0 5h16M0 11h16M8 0v5M8 11v5M4 8h8|g', addlayer: 'M0 8h4M2 6v4|l;M5.500 1.500h10v13h-10zM8 4v8h6|g', addgrid: 'M0 8h4M2 6v4|l;M5.500 1.500h10v13h-10zM5 5h11M5 8h11M5 11h11M8.500 1v14M12 1v14|g',
  mask: 'M1 1v14M15 1v14|r;M4 14V3l4 6 4-6v11M5 14V4l4 6 4-6v10|b', unmask: 'M1 1v14M15 1v14|l;M4 3l8 10M12 3L4 13M5 3l8 10|g', align1: 'M1 8h4M3 4v8M1 6l2-2 2 2M1 10l2 2 2-2M7 8h8M11 2v12M9 4l2-2 2 2M9 12l2 2 2-2|l', align2: 'M3 5v8M1 7l2-2 2 2M1 11l2 2 2-2M0 12l15-8M10 1v9|g', lock: 'M1 1v14M15 1v14M5 7V3h6v4|g;M3 7h10v7H3z|g|l',
  pointer: 'M4.500 .5v12l3-3 2 5 2-1-2-4h4z|k|w', zoomin: 'M4 1h5l2 2v5l-2 2H4L2 8V3zM4 5.500h6M6.500 3v5M10 9l5 5M11 9l5 5|k;M1 15.500h8M1 13v2M5 13v2M8 13v2|k', zoomout: 'M4 1h5l2 2v5l-2 2H4L2 8V3zM4 5.500h6M10 9l5 5M11 9l5 5|g;M1 15.500h8M1 13v2M5 13v2M8 13v2|g', cross: 'M2 8.500h13M8.500 2v13M6.500 6.500h4v4h-4z|k', target: 'M4 2h8l2 3v7l-2 2H4l-2-2V5zM8 0v4M8 12v4M0 8h4M12 8h4M6 8h4M8 6v4|k', snap: 'M8.500 0v5M8.500 11v5|k;M6 4h5L8.500 7zM6 12h5L8.500 9z|k|k',
  pick: 'M3 0v4|k;M0 3h6L3 6z|k|k;M2 12l3-3h8l2 2-3 4H4z|k|c;M1 15L15 6|b', pickl: 'M3 0v4|k;M0 3h6L3 6z|k|k;M7 8v7M9 8h4M10 11h5M9 15h5|k;M1 15L15 4|b', dots: 'M6 4h2v2H6zM3 8h2v2H3zM11 6h2v2h-2zM11 9h2v2h-2zM7 13h2v2H7z|-|k', text: 'M2 2h12v4h-1V4H9v9h2v1H5v-1h2V4H3v2H2z|-|k', annot: 'M1.500 4.500h10v11h-10zM6.500 4v4M6.500 12v4M1 10h3M9 10h3|k;M12 5V1h3v4M12 3h3|r',
  arrow: 'M1 15L11 5M2 15L12 5|k;M7 4l7-3-2 7z|k|k', line: 'M2 14L14 3|k', rect: 'M1.500 3.500h12v10h-12z|k|l', hand: 'M4 15l-3-5v-2h2l1 1V3h2V1h2v1h2v2h2v2h2v5l-2 4z|k|w;M6 3v5M8 3v5M10 4v4|k', eq: DOC + 'M3 9l2 4 1-6h2M8 9h4v4H8v-2h4|p', graphobj: DOC + 'M4.500 5v8h8|k;M6 11l2-3 2 2 2-4|r', handax: 'M3 11L1 7h2l1 1V3h2V1h2v1h2v2h2v6l-2 2z|k|w;M6 3v5M8 3v5|k;M0 13.500h16M14.500 0v14M3 14v2M8 14v2M15 4h1M15 8h1|k', cube: 'M4.500 4.500l3-4h8v10l-3 4h-8z|g|l;M4 4.500h8v10M12 4l3-3|g;M0 7l4-3v6z|l|l',
  colors: 'M0 0h16v3H0z|-|r;M0 4h16v3H0z|-|y;M0 8h16v3H0z|-|b;M0 12h16v3H0z|-|n', bubble: '<circle cx="8" cy="8" r="7.500" stroke="#6a7082"/><circle cx="8" cy="10" r="5" stroke="#6a7082"/><circle cx="8" cy="13" r="2" stroke="#6a7082"/>@', legend: 'M.5 16V.5h15V16M2 4h6M10 2h3v5h-3zM10 4h3M14 9h-4v5h4|k;M2 11h6M5 9v4|b', star: 'M.5 16v-6h15v6|k;M4 3h8M8 0v7M5 0l6 6M11 0L5 6|k', scale: 'M3.500 .5h8v15h-8zM5 3h3M5 8h3M5 13h3M10 3h2M10 6h2M10 9h2M10 12h2|k', stamp: 'M4 1h6l3 3v6l-3 3H4l-3-3V4zM7 3v4h3|k|w;M9 7h4v3l2 3v2H7v-2l2-3z|r|r;M7 15h8|k', fstamp: 'M0 2h5l1 2h8v9H0z|g|l;M8 6h4v4l2 2v3H7v-3h2z|g|l', table: 'M1.500 3.500h13v10h-13zM1 6.500h13M1 10.500h13M5.500 3v10M10.500 3v10|k',
  scatter: 'M1 13h3v3H1zM5 8h3v3H5zM10 9h2v2h-2zM12 2h3v3h-3z|-|k', linesym: 'M2 14L14 2|k;M1 12h3v3H1zM6 7h3v3H6zM12 1h3v3h-3z|-|k', column: 'M1.500 5.500h4v10h-4zM10.500 4.500h4v11h-4z|k|r;M5.500 1.500h5v14h-5z|k|r', multi: 'M.5 .5h15v15H.5z|k|w;M1 8l6-5 4 2 4-3M2 5h3|b;M2 15L13 5M5 5l10 10|k', box: 'M3 .5h10M3 15.500h10M8 1v3M8 12v3M4 4h8v7H4zM3 8h10|r', area: 'M0 4l6 6 3-2 7 5v3H0z|r|r;M5 9l4-5 4 5-3 4z|-|n;M1 15l7-3 8-5v9H0z|-|k', polar: '<circle cx="9" cy="8" r="6" stroke="#000"/>@M1.500 0v16M0 3h3M0 8h3M0 12h3M7 12V6h4|k', candle: 'M3 0v16M1.500 3.500h4v7h-4z|k|w;M11 2v14|r;M9 4h5v9H9z|r|r', book3: 'M1 5l4-4h9v9l-4 5H3z|g|l;M4 5h5v9M9 5l4-3M6 7v5|g',
  bar3d: 'M1.500 7.500l4-6h9v8l-5 6h-8z|g;M4 8h2v7M8 3h2v11M11 5h2v6|g|l', surf: CUBE, wire: 'M1.500 6.500l4-5h9v8l-4 5h-9zM1 6.500h9v8M10 6l4-5M4 9h2M5 12h3M8 4h2|g', heat: 'M1 1h14v14H1z|-|l;M1 1h14M1 5h14M1 10h14M1 15h14M5 1v14M10 1v14|g', contour: 'M0 3l4-2 4 3 4-3 4 3|g;M1 7h14v2H1zM1 10h14v5H1z|g|l', image: 'M.5 .5h15v15H.5z|g|l', face: 'M2 1l3 2h6l3-2v10H2z|g|w;M5 6h2M10 6h2M6 9h4|g;M0 13h16v3H0z|-|l', facex: 'M2 1l3 2h6l3-2v10H2zM2 1l12 11M14 1L2 12|g|w;M0 13h16v3H0z|-|g', facem: 'M2 1l3 2h6l3-2v9l-6 6-6-6z|g|l;M5 6h2M9 6h2M6 10h4|k',
  dotsg: 'M0 4h3v3H0zM4 4h3v3H4zM8 4h3v3H8zM0 9h3v3H0zM4 9h3v3H4zM8 9h3v3H8z|-|l;M13.500 0v16M11 3l2-3 3 3M11 13l2 3 3-3|g', dotsr: 'M0 4h3v3H0zM4 4h3v3H4zM8 4h3v3H8zM4 9h3v3H4z|-|r;M0 9h3v3H0zM8 9h3v3H8z|-|k;M13.500 0v16M11 3l2-3 3 3M11 13l2 3 3-3|k', dotsk: 'M0 4h3v3H0zM8 4h3v3H8zM0 9h3v3H0zM4 9h3v3H4zM8 9h3v3H8z|-|k;M4 4h3v3H4z|-|r;M13.500 0v16M11 3l2-3 3 3M11 13l2 3 3-3|k',
  rotl: 'M5 1h6v11H5z|g|l;M2 5v5q6 6 12 0V5M0 8l2 3 3-2|l', rotr: 'M5 1h6v11H5z|g|l;M14 5v5q-6 6-12 0V5M16 8l-2 3-3-2|l', tiltl: 'M1 1h4l3 14H4z|g|l;M9 4h6M11 1L8 4l3 3|g', tiltr: 'M11 1h4l-3 14H8z|g|l;M1 4h6M5 1l3 3-3 3|g', trap1: 'M5 2h6l3 9H2z|g|l;M1 12h14v3H1z|g|l', trap2: 'M1 1h14v3H1z|g|l;M2 5h12l-3 10H5z|g|l', persp: 'M5 1h6v4H5zM1 9h14v6H1z|g|l;M5 5L1 9M11 5l4 4|g', squares: 'M5.500 .5h10v9h-10zM1.500 6.500h9v9h-9z|g|l', fit: 'M1 1h5L1 6zM15 1v5l-5-5zM1 15v-5l5 5zM15 15h-5l5-5z|l|l;M5 5h6v6H5z|g', axes3: 'M5 5l3-3h6v6l-3 3H5zM5 5h6v6M0 15l5-4M14 8h2|g|l', cube3: 'M.5 5.500l5-5h10v10l-5 5H.5z|l;M4 6l3-3h5v5l-3 4H4zM4 6h5v5|g|l',
  aa: 'M11 1h5v3h-5zM6 4h6v3H6zM1 7h5v3H1zM10 8h6v2h-6zM5 11h6v2H5zM1 13h5v3H1z|-|k;M10 4h5v2h-5zM6 9h4v2H6z|-|l', ax1: 'M2.500 1v13H15M1 4l2-3 2 3M12 11l3 3-3 2M2 14L12 3M8 3h4v4|r', ax2: 'M2.500 1v13M3 13L13 3|k;M2 13.500h13M12 11l3 3-3 2|r', ax3: 'M3 13.500h12M3 13L13 4|k;M2.500 1v13M0 4l2-3 3 3|r', xy: 'M1 6l5 6M6 6l-5 6M9 5l3 4 3-4M12 9v3M3 3q5-4 9 0M12 0v3H9M12 14q-5 3-8 0M4 16v-3h3|k', speed: 'M1.500 1v14H16M3 5H1M3 9H1|k;M11 1h2v2h-2z|k|k;M6 4h5l-3 5 3 2v3M7 9l-3 4M10 5l2 3h3M7 4l-2 3M7 5h3l-2 4|k',
  lay1: 'M.5 .5h15v15H.5zM2 5h11M1 8h15M3 10v4h3M10 10v4h3|k', lay2: 'M.5 .5h15v6H.5zM3 2v3h3M9 2v3h3M.5 9.500h6v6h-6zM9.500 9.500h6v6h-6zM3 11v2h2M12 11v2h2|k', lay3: 'M.5 .5h6v6h-6zM9.500 .5h6v6h-6zM3 2v2h2M12 2v2h2M.5 9.500h15v6H.5zM3 11v3h3M9 11v3h3|k', lay4: 'M.5 .5h15v5H.5z|b|w;M1 4l3-2 4 2 3-2 4 2|r;M2.500 7.500h10v4|b;M5.500 9.500h10v6h-10z|k|w;M7 12l3 2 4-3|k',
  axl: 'M3.500 1v13.500H15M1 4h2M1 8h2M6 13v2M10 13v2|k', axt: 'M2.500 1v14M14.500 1v14|l;M2 2.500h13M5 2v2M9 2v2|k', axr: 'M2.500 1v13M2 14.500h12|l;M14.500 1v14M12 4h2M12 8h2|k', axb: 'M2.500 2v12M2 14.500h12|k;M2 2.500h12M14.500 2v12|k', axi: 'M2.500 1v13.500H15|l;M8 2v7h6M8 5h2|k', axn: 'M2.500 1v13.500H15|l;M8 4v4h6M8 8l5-5|r;M8 2v7|k',
  al1: 'M1.500 1v14|g;M4.500 1.500h7v5h-7zM4.500 9.500h11v5h-11z|g', al2: 'M14.500 1v14|g;M5.500 1.500h7v5h-7zM2.500 9.500h10v5h-10z|g', al3: 'M1 1.500h14|g;M2.500 4.500h4v10h-4zM9.500 4.500h5v6h-5z|g', al4: 'M1 15.500h14|g;M2.500 1.500h4v11h-4zM9.500 5.500h4v7h-4z|g', al5: 'M8 0v16M5.500 2.500h5v4h-5zM3.500 9.500h9v5h-9z|g', al6: 'M0 8h16M2.500 5.500h5v5h-5zM9.500 3.500h5v10h-5z|g', al7: 'M1 1v5M14 1v5M3.500 1.500h8v5h-8zM3 9v6M15 9v6M5.500 9.500h8v5h-8z|g', al8: 'M1 1h6M1.500 3.500h5v8h-5zM1 14h6M9 2h6M9.500 5.500h5v8h-5zM9 15h6|g',
  sp1: 'M.5 4.500h3v8h-3zM6.500 2.500h4v12h-4zM12.500 6.500h3v3h-3zM4 8h2M11 8h2|g', sp2: 'M6.500 .5h3v3h-3zM2.500 6.500h12v3h-12zM5.500 12.500h7v3h-7zM8 4v2M8 10v2|g', fr1: 'M.5 1.500h6v6h-6zM9.500 9.500h5v5h-5z|g|l;M4.500 4.500h8v8h-8z|g|w', fr2: 'M4.500 4.500h8v8h-8z|g|w;M.5 1.500h6v6h-6zM9.500 9.500h5v5h-5z|g|l', bx1: 'M4.500 4.500h7v7h-7zM1 3v2M1 11v2M14 3v2M14 11v2M14 7v2|g', bx2: 'M4.500 4.500h7v7h-7zM1 3v2M1 11v2M14 3v2M14 11v2M6 7h1M9 7h1M7 9h2|g', grp: 'M0 1h3v3H0zM13 1h3v3h-3zM0 13h3v3H0zM13 13h3v3h-3z|-|g;M2.500 2.500h7v7h-7zM6.500 5.500h8v8h-8z|g|w', ungrp: 'M0 1h3v3H0zM9 1h3v3H9zM0 10h3v3H0zM4 5h3v3H4zM13 5h3v3h-3zM4 13h3v3H4zM13 13h3v3h-3z|-|g;M1.500 2.500h9v9h-9zM6.500 6.500h8v8h-8z|g|w'
};
C['#'] = '#e8b04a';

function draw(def) {
  let html = '';
  if (def[0] === '<') {
    const cut = def.indexOf('@');
    html = cut < 0 ? def : def.slice(0, cut);
    def = cut < 0 ? '' : def.slice(cut + 1);
  }
  for (const shape of def.split(';').filter(Boolean)) {
    const [d, stroke = 'k', fill = '-'] = shape.split('|');
    html += `<path d="${d}" stroke="${C[stroke]}" fill="${C[fill]}"/>`;
  }
  return html;
}

for (const box of document.querySelectorAll('.tools')) {
  box.innerHTML = box.dataset.icons.trim().split(/\s+/).map(token => {
    if (token === '|') return '<hr>';
    const name = token.replace(/[*^]/g, '');
    const cls = [token[0] === '*' && 'on', token.endsWith('^^') ? 'drop2' : token.endsWith('^') && 'drop'].filter(Boolean).join(' ');
    return `<button class="${cls}" aria-label="${name}"><svg viewBox="0 0 16 16">${draw(ICONS[name])}</svg></button>`;
  }).join('');
}
for (const bar of document.querySelectorAll('.bar')) {
  bar.insertAdjacentHTML('beforeend', '<svg class="more" viewBox="0 0 8 8"><path d="M1 1.500h6" stroke="#000"/><path d="M1 4h6L4 7z"/></svg>');
}
```
